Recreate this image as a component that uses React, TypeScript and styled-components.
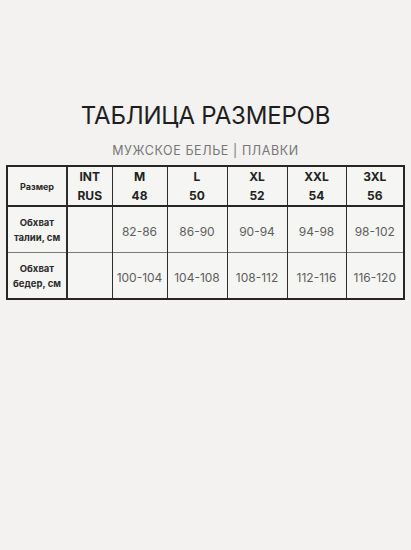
import styled, { createGlobalStyle } from 'styled-components'

const GlobalStyle = createGlobalStyle`
  html, body {
    margin: 0;
    padding: 0;
    background: #f3f2f1;
    font-family: Inter, "Noto Sans", sans-serif;
  }
`

const Page = styled.div`
  width: 411px;
  height: 550px;
  box-sizing: border-box;
  padding: 102px 7px 0 7px;
  display: flex;
  flex-direction: column;
  align-items: center;
`

const Title = styled.h1`
  margin: 0;
  font-size: 24px;
  font-weight: 400;
  line-height: 28px;
  color: #1e1e1e;
  letter-spacing: -0.2px;
`

const Subtitle = styled.div`
  margin-top: 13px;
  font-size: 12.5px;
  line-height: 16px;
  color: #777;
  letter-spacing: 0.6px;
`

const Table = styled.table`
  margin-top: 6px;
  width: 397px;
  border-collapse: collapse;
  table-layout: fixed;
  border: 2px solid #262626;
  background: #f5f5f4;
`

const Cell = styled.td<{ $thick?: boolean; $soft?: boolean; $height: number }>`
  height: ${(p) => p.$height}px;
  padding: 0;
  text-align: center;
  vertical-align: middle;
  border-left: ${(p) => (p.$thick ? '2px' : '1.5px')} solid #2e2e2e;
  border-top: ${(p) => (p.$soft ? '1px solid #7a7a7a' : '2px solid #262626')};
`

const HeadText = styled.div`
  font-size: 12px;
  font-weight: 700;
  line-height: 19px;
  color: #222;
`

const LabelText = styled.div<{ $small?: boolean }>`
  font-size: ${(p) => (p.$small ? '9px' : '9.5px')};
  font-weight: 700;
  line-height: 15px;
  color: #2a2a2a;
`

const Value = styled.span`
  font-size: 12px;
  color: #5e5e5e;
`

const sizes = [
  { int: 'M', rus: '48', w: 55 },
  { int: 'L', rus: '50', w: 60 },
  { int: 'XL', rus: '52', w: 60 },
  { int: 'XXL', rus: '54', w: 59 },
  { int: '3XL', rus: '56', w: 58 },
]

const rows = [
  { label: ['Обхват', 'талии, см'], values: ['82-86', '86-90', '90-94', '94-98', '98-102'] },
  { label: ['Обхват', 'бедер, см'], values: ['100-104', '104-108', '108-112', '112-116', '116-120'] },
]

export default function App() {
  return (
    <>
      <GlobalStyle />
      <Page>
        <Title>ТАБЛИЦА РАЗМЕРОВ</Title>
        <Subtitle>МУЖСКОЕ БЕЛЬЕ | ПЛАВКИ</Subtitle>
        <Table>
          <colgroup>
            <col style={{ width: 60 }} />
            <col style={{ width: 45 }} />
            {sizes.map((s) => (
              <col key={s.int} style={{ width: s.w }} />
            ))}
          </colgroup>
          <tbody>
            <tr>
              <Cell $height={37}>
                <LabelText $small>Размер</LabelText>
              </Cell>
              <Cell $height={37} $thick>
                <HeadText>INT</HeadText>
                <HeadText>RUS</HeadText>
              </Cell>
              {sizes.map((s) => (
                <Cell key={s.int} $height={37}>
                  <HeadText>{s.int}</HeadText>
                  <HeadText>{s.rus}</HeadText>
                </Cell>
              ))}
            </tr>
            {rows.map((r, i) => (
              <tr key={i}>
                <Cell $height={45} $soft={i > 0}>
                  <LabelText>{r.label[0]}</LabelText>
                  <LabelText>{r.label[1]}</LabelText>
                </Cell>
                <Cell $height={45} $thick $soft={i > 0} />
                {r.values.map((v) => (
                  <Cell key={v} $height={45} $soft={i > 0}>
                    <Value>{v}</Value>
                  </Cell>
                ))}
              </tr>
            ))}
          </tbody>
        </Table>
      </Page>
    </>
  )
}
